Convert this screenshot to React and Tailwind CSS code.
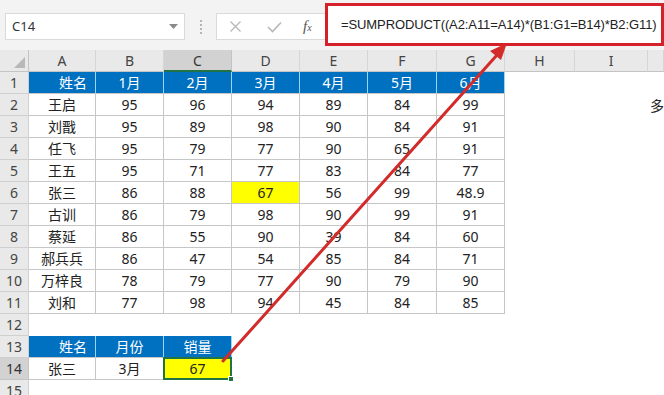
import React from "react";

const names = ["王启", "刘戬", "任飞", "王五", "张三", "古训", "蔡延", "郝兵兵", "万梓良", "刘和"];
const data = [
  [95, 95, 95, 95, 86, 86, 86, 86, 78, 77],
  [96, 89, 79, 71, 88, 79, 55, 47, 79, 98],
  [94, 98, 77, 77, 67, 98, 90, 54, 77, 94],
  [89, 90, 90, 83, 56, 90, 39, 85, 90, 45],
  [84, 84, 65, 84, 99, 99, 84, 84, 79, 84],
  [99, 91, 91, 77, "48.9", 91, 60, 71, 90, 85],
];
const letters = ["A", "B", "C", "D", "E", "F", "G", "H", "I", ""];
const months = ["1月", "2月", "3月", "4月", "5月", "6月"];

const FONT = { fontFamily: '"Noto Sans", "Noto Sans CJK SC", sans-serif' };

function RowHead({ n, sel }) {
  return (
    <div
      className={
        sel
          ? "flex items-center justify-center bg-[#d2d2d2] border-r border-b border-[#c4c4c4] text-[14px] text-[#333]"
          : "flex items-center justify-center bg-[#e9e9e9] border-r border-b border-[#d0d0d0] text-[14px] text-[#444]"
      }
    >
      {n}
    </div>
  );
}

function Blue({ children, name }) {
  return (
    <div
      className={
        name
          ? "flex items-center justify-center pl-[22px] bg-[#0070c0] border-r border-[#9ad6f2] border-b border-b-[#c6c6c6] text-white text-[14px]"
          : "flex items-center justify-center bg-[#0070c0] border-r border-[#9ad6f2] border-b border-b-[#c6c6c6] text-white text-[14px]"
      }
    >
      {children}
    </div>
  );
}

function Cell({ children, yellow }) {
  return (
    <div
      className={
        yellow
          ? "flex items-center justify-center bg-[#ffff00] border-r border-b border-[#c6c6c6] text-[14px] text-[#222]"
          : "flex items-center justify-center bg-white border-r border-b border-[#c6c6c6] text-[14px] text-[#222]"
      }
    >
      {children}
    </div>
  );
}

function Empty({ children }) {
  return <div className="flex items-center bg-white text-[14px] text-[#222]">{children}</div>;
}

export default function App() {
  const rows = [];
  rows.push(
    <React.Fragment key="r1">
      <RowHead n={1} />
      <Blue name>姓名</Blue>
      {months.map((m) => (
        <Blue key={m}>{m}</Blue>
      ))}
      <Empty />
      <Empty />
      <Empty />
    </React.Fragment>
  );
  for (let i = 0; i < 10; i++) {
    rows.push(
      <React.Fragment key={"r" + (i + 2)}>
        <RowHead n={i + 2} />
        <Cell>{names[i]}</Cell>
        {data.map((col, c) => (
          <Cell key={c} yellow={i === 4 && c === 2}>
            {col[i]}
          </Cell>
        ))}
        <Empty />
        <Empty />
        <Empty>{i === 0 ? <span className="pl-[2px]">多</span> : null}</Empty>
      </React.Fragment>
    );
  }
  rows.push(
    <React.Fragment key="r12">
      <RowHead n={12} />
      {Array.from({ length: 10 }).map((_, k) => (
        <Empty key={k} />
      ))}
    </React.Fragment>
  );
  rows.push(
    <React.Fragment key="r13">
      <RowHead n={13} />
      <Blue name>姓名</Blue>
      <Blue>月份</Blue>
      <Blue>销量</Blue>
      {Array.from({ length: 7 }).map((_, k) => (
        <Empty key={k} />
      ))}
    </React.Fragment>
  );
  rows.push(
    <React.Fragment key="r14">
      <RowHead n={14} sel />
      <Cell>张三</Cell>
      <Cell>3月</Cell>
      <div className="relative flex items-center justify-center bg-[#ffff00] border-2 border-[#217346] text-[14px] text-[#222] -ml-[1px] -mt-[1px]">
        67
        <div className="absolute -right-[4px] -bottom-[4px] w-[6px] h-[6px] bg-[#217346] border border-white" />
      </div>
      {Array.from({ length: 7 }).map((_, k) => (
        <Empty key={k} />
      ))}
    </React.Fragment>
  );
  rows.push(
    <React.Fragment key="r15">
      <RowHead n={15} />
      {Array.from({ length: 10 }).map((_, k) => (
        <Empty key={k} />
      ))}
    </React.Fragment>
  );

  return (
    <div className="relative w-[664px] h-[395px] overflow-hidden bg-white" style={FONT}>
      {/* toolbar */}
      <div className="h-[50px] bg-[#f3f3f3] flex items-start pt-[13px] pl-[5px]">
        <div className="w-[180px] h-[27px] bg-white border border-[#dadada] flex items-center pl-[6px] text-[13px] text-[#333] relative">
          C14
          <svg className="absolute right-[6px] top-[10px]" width="9" height="6" viewBox="0 0 9 6">
            <path d="M0 0 L9 0 L4.5 5 Z" fill="#8a8a8a" />
          </svg>
        </div>
        <div className="w-[31px] h-[27px] flex flex-col items-center justify-center gap-[2px]">
          <div className="w-[2px] h-[2px] bg-[#b5b5b5]" />
          <div className="w-[2px] h-[2px] bg-[#b5b5b5]" />
          <div className="w-[2px] h-[2px] bg-[#b5b5b5]" />
          <div className="w-[2px] h-[2px] bg-[#b5b5b5]" />
        </div>
        <div className="flex-1 h-[27px] bg-white border border-[#dadada] border-r-0 flex items-center">
          <svg className="ml-[12px]" width="13" height="13" viewBox="0 0 13 13">
            <path d="M1.5 1.5 L11.5 11.5 M11.5 1.5 L1.5 11.5" stroke="#b8b8b8" strokeWidth="1.4" fill="none" />
          </svg>
          <svg className="ml-[25px]" width="15" height="12" viewBox="0 0 15 12">
            <path d="M1 6 L5.5 10.5 L14 1.5" stroke="#b8b8b8" strokeWidth="1.6" fill="none" />
          </svg>
          <span className="ml-[21px] text-[15px] text-[#555] italic" style={{ fontFamily: '"Liberation Serif", serif' }}>
            f<span className="text-[10px]">x</span>
          </span>
        </div>
      </div>

      {/* red formula annotation */}
      <div
        className="absolute left-[325px] top-[3px] w-[339px] h-[43px] border-[3px] border-[#d52129] bg-white flex items-center pl-[13px] text-[13px] text-[#222] whitespace-nowrap tracking-[-0.1px]"
        style={{ fontFamily: '"Liberation Sans", sans-serif' }}
      >
        =SUMPRODUCT((A2:A11=A14)*(B1:G1=B14)*B2:G11)
      </div>

      {/* sheet */}
      <div className="grid grid-cols-[29px_67px_68px_68px_68px_68px_69px_68px_70px_73px_1fr] auto-rows-[22px]">
        <div className="bg-[#e9e9e9] border-r border-b border-[#c4c4c4] relative">
          <svg className="absolute right-[3px] bottom-[3px]" width="11" height="11" viewBox="0 0 11 11">
            <path d="M11 0 L11 11 L0 11 Z" fill="#b8b8b8" />
          </svg>
        </div>
        {letters.map((l, k) => (
          <div
            key={k}
            className={
              l === "C"
                ? "flex items-center justify-center bg-[#d2d2d2] border-r border-[#c4c4c4] border-b-2 border-b-[#217346] text-[14px] text-[#333]"
                : "flex items-center justify-center bg-[#e9e9e9] border-r border-[#d6d6d6] border-b border-b-[#c4c4c4] text-[14px] text-[#444]"
            }
          >
            {l}
          </div>
        ))}
        {rows}
      </div>

      {/* arrow */}
      <svg className="absolute left-0 top-0 pointer-events-none" width="664" height="395" viewBox="0 0 664 395">
        <line x1="223" y1="361" x2="497" y2="55" stroke="#d32a2a" strokeWidth="3" strokeLinecap="round" />
        <path d="M507 43 L490 51 L501 60 Z" fill="#d32a2a" />
      </svg>
    </div>
  );
}
